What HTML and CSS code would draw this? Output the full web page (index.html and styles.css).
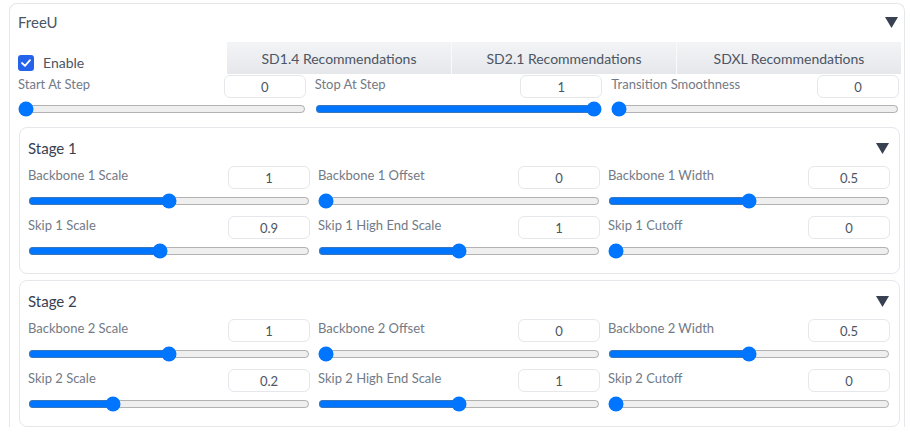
FILE: index.html
```html
<!DOCTYPE html>
<html lang="en">
<head>
    <meta charset="UTF-8">
    <meta name="viewport" content="width=device-width, initial-scale=1.0">
    <title>FreeU</title>
    <link rel="stylesheet" href="styles.css">
</head>
<body>
    <div class="painel">
        <div class="cabecalho">
            <span class="titulo">FreeU</span>
            <svg class="seta" width="13" height="11" viewBox="0 0 13 11"><polygon points="0,0 13,0 6.5,11" fill="#374151"/></svg>
        </div>

        <div class="linha-topo">
            <label class="habilitar">
                <span class="caixa"><svg width="10" height="8" viewBox="0 0 10 8"><polyline points="1,4 4,6.8 9,1.2" fill="none" stroke="white" stroke-width="1.8" stroke-linecap="round" stroke-linejoin="round"/></svg></span>
                Enable
            </label>
            <div class="botoes">
                <button>SD1.4 Recommendations</button>
                <button>SD2.1 Recommendations</button>
                <button>SDXL Recommendations</button>
            </div>
        </div>

        <div class="grade">
            <div class="controle">
                <div class="rotulo"><span>Start At Step</span><input type="text" value="0"></div>
                <input type="range" min="0" max="1" step="0.01" value="0">
            </div>
            <div class="controle">
                <div class="rotulo"><span>Stop At Step</span><input type="text" value="1"></div>
                <input type="range" min="0" max="1" step="0.01" value="1">
            </div>
            <div class="controle">
                <div class="rotulo"><span>Transition Smoothness</span><input type="text" value="0"></div>
                <input type="range" min="0" max="1" step="0.01" value="0">
            </div>
        </div>

        <div class="estagio">
            <div class="cabecalho-estagio">
                <span>Stage 1</span>
                <svg class="seta" width="13" height="11" viewBox="0 0 13 11"><polygon points="0,0 13,0 6.5,11" fill="#374151"/></svg>
            </div>
            <div class="grade grade-estagio">
                <div class="controle">
                    <div class="rotulo"><span>Backbone 1 Scale</span><input type="text" value="1"></div>
                    <input type="range" min="0" max="2" step="0.01" value="1">
                </div>
                <div class="controle">
                    <div class="rotulo"><span>Backbone 1 Offset</span><input type="text" value="0"></div>
                    <input type="range" min="0" max="1" step="0.01" value="0">
                </div>
                <div class="controle">
                    <div class="rotulo"><span>Backbone 1 Width</span><input type="text" value="0.5"></div>
                    <input type="range" min="0" max="1" step="0.01" value="0.5">
                </div>
                <div class="controle">
                    <div class="rotulo"><span>Skip 1 Scale</span><input type="text" value="0.9"></div>
                    <input type="range" min="0" max="2" step="0.01" value="0.93">
                </div>
                <div class="controle">
                    <div class="rotulo"><span>Skip 1 High End Scale</span><input type="text" value="1"></div>
                    <input type="range" min="0" max="2" step="0.01" value="1">
                </div>
                <div class="controle">
                    <div class="rotulo"><span>Skip 1 Cutoff</span><input type="text" value="0"></div>
                    <input type="range" min="0" max="1" step="0.01" value="0">
                </div>
            </div>
        </div>

        <div class="estagio">
            <div class="cabecalho-estagio">
                <span>Stage 2</span>
                <svg class="seta" width="13" height="11" viewBox="0 0 13 11"><polygon points="0,0 13,0 6.5,11" fill="#374151"/></svg>
            </div>
            <div class="grade grade-estagio">
                <div class="controle">
                    <div class="rotulo"><span>Backbone 2 Scale</span><input type="text" value="1"></div>
                    <input type="range" min="0" max="2" step="0.01" value="1">
                </div>
                <div class="controle">
                    <div class="rotulo"><span>Backbone 2 Offset</span><input type="text" value="0"></div>
                    <input type="range" min="0" max="1" step="0.01" value="0">
                </div>
                <div class="controle">
                    <div class="rotulo"><span>Backbone 2 Width</span><input type="text" value="0.5"></div>
                    <input type="range" min="0" max="1" step="0.01" value="0.5">
                </div>
                <div class="controle">
                    <div class="rotulo"><span>Skip 2 Scale</span><input type="text" value="0.2"></div>
                    <input type="range" min="0" max="1" step="0.01" value="0.29">
                </div>
                <div class="controle">
                    <div class="rotulo"><span>Skip 2 High End Scale</span><input type="text" value="1"></div>
                    <input type="range" min="0" max="2" step="0.01" value="1">
                </div>
                <div class="controle">
                    <div class="rotulo"><span>Skip 2 Cutoff</span><input type="text" value="0"></div>
                    <input type="range" min="0" max="1" step="0.01" value="0">
                </div>
            </div>
        </div>
    </div>
</body>
</html>
```

FILE: styles.css
```css
body {
    font-family: Lato, "Liberation Sans", sans-serif;
    margin: 0;
    padding: 3px 5px 0 9px;
    background-color: white;
    color: #4b5563;
}

.painel {
    border: 1px solid #e5e7eb;
    border-bottom: none;
    border-radius: 8px 8px 0 0;
    padding: 8px 3px 0 8px;
}

.cabecalho {
    display: flex;
    justify-content: space-between;
    align-items: center;
    height: 20px;
    font-size: 15px;
}

.cabecalho .seta {
    margin-right: 3px;
}

.linha-topo {
    display: flex;
    margin-top: 10px;
    height: 32px;
}

.habilitar {
    width: 209px;
    display: flex;
    align-items: center;
    align-self: flex-end;
    gap: 9px;
    font-size: 14px;
    color: #4b5563;
    margin-bottom: 3px;
}

.caixa {
    width: 16px;
    height: 16px;
    border-radius: 3px;
    background-color: #2563eb;
    display: flex;
    align-items: center;
    justify-content: center;
}

.botoes {
    flex: 1;
    display: flex;
}

.botoes button {
    flex: 1;
    border: none;
    border-right: 1px solid #f9fafb;
    background: linear-gradient(#f3f4f6, #e5e7eb);
    color: #4b5563;
    font-family: inherit;
    font-size: 14px;
    cursor: pointer;
}

.botoes button:last-child {
    border-right: none;
}

.grade {
    display: grid;
    grid-template-columns: repeat(3, 1fr);
    column-gap: 9px;
    row-gap: 7px;
    margin-top: 1px;
    padding-right: 2px;
}

.controle {
    display: flex;
    flex-direction: column;
    gap: 3px;
}

.rotulo {
    display: flex;
    justify-content: space-between;
    align-items: flex-start;
    font-size: 13px;
    color: #737a86;
    line-height: 19px;
}

.rotulo input {
    width: 82px;
    height: 23px;
    box-sizing: border-box;
    border: 1px solid #e5e7eb;
    border-radius: 6px;
    text-align: center;
    font-family: inherit;
    font-size: 13px;
    color: #4b5563;
    padding: 0;
}

input[type="range"] {
    width: 100%;
    margin: 0;
    height: 16px;
}

.estagio {
    margin: 10px 1px 0 1px;
    border: 1px solid #e5e7eb;
    border-radius: 8px;
    padding: 10px 9px 14px 8px;
}

.estagio + .estagio {
    margin-top: 6px;
}

.cabecalho-estagio {
    display: flex;
    justify-content: space-between;
    align-items: center;
    height: 20px;
    font-size: 15px;
    color: #374151;
    margin-bottom: 8px;
}

.cabecalho-estagio .seta {
    margin-right: 1px;
}

.grade-estagio {
    column-gap: 8px;
    padding-right: 0;
    margin-top: 0;
}

.grade-estagio .controle {
    gap: 4px;
}
```
